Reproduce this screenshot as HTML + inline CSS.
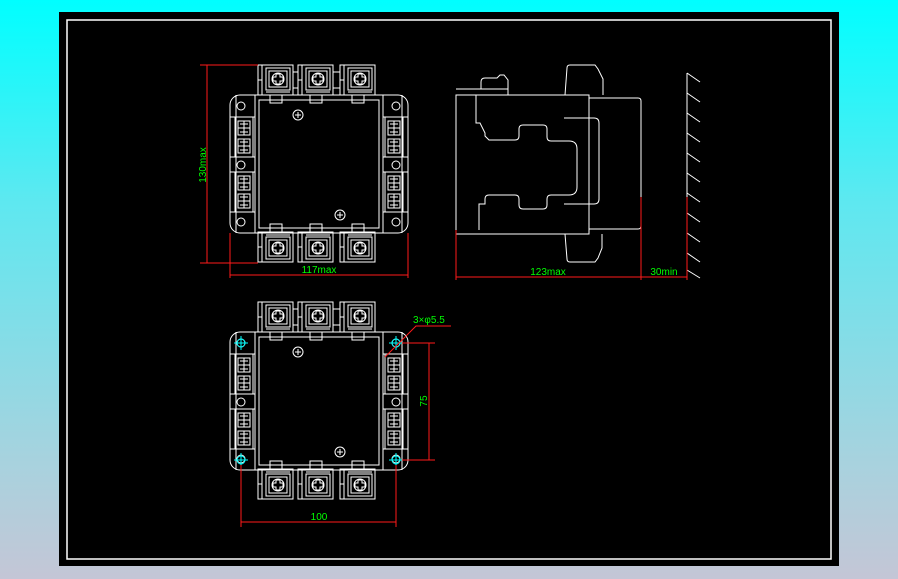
<!DOCTYPE html>
<html><head><meta charset="utf-8"><style>
html,body{margin:0;padding:0;width:898px;height:579px;overflow:hidden;background:linear-gradient(#00ffff 0%,#5ee8f0 35%,#a8d2de 80%,#c4c6d6 100%);}
svg{position:absolute;left:0;top:0}
text{font-family:"Liberation Sans",sans-serif;font-size:10px;fill:#00ff00}
</style></head><body>
<svg width="898" height="579" viewBox="0 0 898 579">
<defs>
<g id="term" stroke="#fff" fill="none" stroke-width="1">
 <rect x="0" y="0" width="35" height="30"/>
 <line x1="4" y1="0" x2="4" y2="30"/>
 <line x1="0" y1="15" x2="4" y2="15"/>
 <rect x="8" y="3" width="24" height="22"/>
 <rect x="11" y="6" width="18" height="16"/>
 <circle cx="20" cy="14" r="6"/>
 <path d="M18 9h4v3h3v4h-3v3h-4v-3h-3v-4h3z"/>
 <rect x="12" y="30" width="12" height="8"/>
 <line x1="8" y1="27" x2="32" y2="27"/>
</g>
<g id="blk" stroke="#fff" fill="none" stroke-width="1">
 <rect x="0" y="0" width="18" height="40"/>
 <rect x="3" y="4" width="12" height="14"/>
 <rect x="3" y="22" width="12" height="14"/>
 <path d="M9 4v14M3 11h12M9 22v14M3 29h12M5 7h8M5 15h8M5 25h8M5 33h8"/>
</g>
<g id="front" stroke="#fff" fill="none" stroke-width="1">
 <rect x="230" y="95" width="178" height="138" rx="10"/>
 <rect x="255" y="95" width="128" height="138"/>
 <rect x="259" y="100" width="120" height="128"/>
 <line x1="236" y1="95" x2="236" y2="233"/>
 <line x1="402" y1="95" x2="402" y2="233"/>
 <circle cx="241" cy="106" r="4"/><circle cx="241" cy="165" r="4"/><circle cx="241" cy="222" r="4"/>
 <circle cx="396" cy="106" r="4"/><circle cx="396" cy="165" r="4"/><circle cx="396" cy="222" r="4"/>
 <use href="#blk" x="235" y="117"/><use href="#blk" x="235" y="172"/>
 <use href="#blk" x="385" y="117"/><use href="#blk" x="385" y="172"/>
 <path d="M230 117h25M230 157h25M230 172h25M230 212h25M383 117h25M383 157h25M383 172h25M383 212h25"/>
 <use href="#term" x="258" y="65"/><use href="#term" x="298" y="65"/><use href="#term" x="340" y="65"/>
 <g transform="translate(0,327) scale(1,-1)">
 <use href="#term" x="258" y="65"/><use href="#term" x="298" y="65"/><use href="#term" x="340" y="65"/>
 </g>
 <path d="M293 72h5M293 88h5M333 72h7M333 88h7"/>
 <circle cx="298" cy="115" r="5"/><path d="M295 115h6M298 112v6"/>
 <circle cx="340" cy="215" r="5"/><path d="M337 215h6M340 212v6"/>
</g>
</defs>
<rect x="59" y="12" width="780" height="554" fill="#000"/>
<rect x="67" y="20" width="764" height="539" fill="none" stroke="#fff" stroke-width="1.5"/>

<use href="#front"/>
<g stroke="#ff1a1a" stroke-width="1" fill="none">
 <path d="M207 65v198M200 65h58M200 263h58M230 233v45M408 233v45M230 275h178"/>
</g>
<text x="206" y="165" transform="rotate(-90 206 165)" text-anchor="middle">130max</text>
<text x="319" y="273" text-anchor="middle">117max</text>

<!-- side view -->
<g stroke="#fff" fill="none" stroke-width="1">
 <rect x="456" y="95" width="133" height="139"/>
 <path d="M589 98h49q3 0 3 3v125q0 3-3 3h-49"/>
 <path d="M456 89h52v6M481 89v-7q0-4 4-4h12l3-3h4l4 5v9"/>
 <path d="M565 95l2-27q0-3 3-3h25l3 4 5 10v16"/>
 <path d="M565 234l2 25q0 3 3 3h25l3-4 4-10v-14"/>
 <path d="M476 95v28h4l5 10v3l4 4h26q4 0 4-4v-7q0-4 4-4h20q4 0 4 4v8q0 4 4 4h18q8 0 8 8v38q0 8-8 8h-18q-4 0-4 4v6q0 4-4 4h-20q-4 0-4-4v-6q0-4-4-4h-26q-4 0-4 4v5h-6v26"/>
 <path d="M564 118h30q5 0 5 5v76q0 5-5 5h-30"/>
 <line x1="687" y1="73" x2="687" y2="278"/>
 <path d="M687 73l13 9M687 93l13 9M687 113l13 9M687 133l13 9M687 153l13 9M687 173l13 9M687 193l13 9M687 213l13 9M687 233l13 9M687 253l13 9M687 270l13 8"/>
</g>
<g stroke="#ff1a1a" stroke-width="1" fill="none">
 <path d="M456 230v50M641 197v83M687 197v83M456 277h231"/>
</g>
<text x="548" y="275" text-anchor="middle">123max</text>
<text x="664" y="275" text-anchor="middle">30min</text>

<!-- bottom view -->
<use href="#front" transform="translate(0,237)"/>
<g stroke="#00ffff" stroke-width="1" fill="none">
 <circle cx="241" cy="343" r="4"/><path d="M234 343h14M241 336v14"/>
 <circle cx="396" cy="343" r="4"/><path d="M389 343h14M396 336v14"/>
 <circle cx="241" cy="460" r="4"/><path d="M234 460h14M241 453v14"/>
 <circle cx="396" cy="460" r="4"/><path d="M389 460h14M396 453v14"/>
</g>
<g stroke="#ff1a1a" stroke-width="1" fill="none">
 <path d="M241 465v62M396 465v62M241 522h155"/>
 <path d="M402 343h33M402 460h33M429 343v117"/>
 <path d="M385 357l31-31h35"/>
</g>
<text x="319" y="520" text-anchor="middle">100</text>
<text x="427" y="401" transform="rotate(-90 427 401)" text-anchor="middle">75</text>
<text x="413" y="323">3×φ5.5</text>
</svg>
</body></html>
